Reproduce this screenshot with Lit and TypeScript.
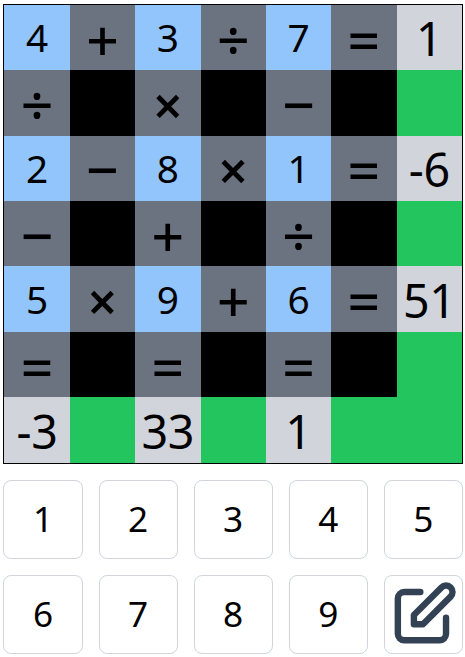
import { LitElement, html, css } from "lit";
import { customElement, state } from "lit/decorators.js";

type Kind = "digit" | "op" | "op times" | "block" | "result" | "ok";

const BOARD = [
  ["4", "+", "3", "÷", "7", "=", "1"],
  ["÷", "", "×", "", "−", "", ""],
  ["2", "−", "8", "×", "1", "=", "-6"],
  ["−", "", "+", "", "÷", "", ""],
  ["5", "×", "9", "+", "6", "=", "51"],
  ["=", "", "=", "", "=", "", ""],
  ["-3", "", "33", "", "1", "", ""],
];

function kindOf(row: number, col: number, text: string): Kind {
  if (row === 6 || col === 6) return text ? "result" : "ok";
  if (!text) return "block";
  if (row % 2 === 0 && col % 2 === 0) return "digit";
  return text === "×" ? "op times" : "op";
}

@customElement("app-root")
export class AppRoot extends LitElement {
  static styles = css`
    :host {
      display: block;
      box-sizing: border-box;
      padding: 4px 2px 0 3.45px;
      height: 657px;
      overflow: hidden;
      background: #fff;
      color: #000;
      font-family: "Noto Sans", "Open Sans", sans-serif;
    }
    .board {
      box-sizing: border-box;
      width: 459.5px;
      height: 460px;
      border: 1px solid #000;
      display: grid;
      grid-template-columns: repeat(7, minmax(0, 1fr));
      grid-template-rows: repeat(6, 65.36px) minmax(0, 1fr);
    }
    .cell {
      box-sizing: border-box;
      display: flex;
      align-items: center;
      justify-content: center;
      line-height: 1;
      white-space: nowrap;
    }
    .digit {
      background: #93c5fd;
      font-size: 38.8px;
    }
    .op {
      background: #6b7280;
      font-size: 57px;
      font-weight: 500;
      line-height: 0.7;
      padding-top: 4px;
    }
    .times {
      font-size: 52px;
      font-weight: 600;
      padding-top: 4px;
    }
    .block {
      background: #000;
    }
    .result {
      background: #d1d5db;
      font-size: 46.6px;
      letter-spacing: -0.3px;
      line-height: 0.9;
      padding-top: 3px;
    }
    .ok {
      background: #22c55e;
    }
    .pad {
      width: 459.5px;
      margin-top: 15.5px;
      display: grid;
      grid-template-columns: repeat(5, minmax(0, 1fr));
      grid-auto-rows: 79.1px;
      gap: 16px;
    }
    .key {
      box-sizing: border-box;
      display: flex;
      align-items: center;
      justify-content: center;
      margin: 0;
      padding: 0 0 1px;
      border: 1px solid #d1d5db;
      border-radius: 8px;
      background: #fff;
      color: inherit;
      font: inherit;
      font-size: 35.2px;
      line-height: 1;
    }
    .edit {
      padding: 0;
      color: #334155;
    }
    .edit svg {
      display: block;
      width: 100%;
      height: 100%;
    }
  `;

  @state() private board = BOARD;

  render() {
    return html`
      <div class="board">
        ${this.board.map((row, r) =>
          row.map((text, c) => html`<div class="cell ${kindOf(r, c, text)}">${text}</div>`)
        )}
      </div>
      <div class="pad">
        ${[1, 2, 3, 4, 5, 6, 7, 8, 9].map((n) => html`<button class="key">${n}</button>`)}
        <button class="key edit" aria-label="Notes">
          <svg viewBox="0 0 24 24" fill="none" stroke="currentColor" stroke-width="2" stroke-linecap="round" stroke-linejoin="round">
            <path d="M11 5H6a2 2 0 00-2 2v11a2 2 0 002 2h11a2 2 0 002-2v-5m-1.414-9.414a2 2 0 112.828 2.828L11.828 15H9v-2.828l8.586-8.586z" />
          </svg>
        </button>
      </div>
    `;
  }
}
